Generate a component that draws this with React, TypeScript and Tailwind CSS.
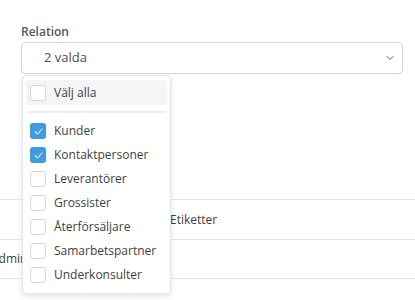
import { ChevronDown } from 'lucide-react';

const options = [
  { label: 'Kunder', checked: true },
  { label: 'Kontaktpersoner', checked: true },
  { label: 'Leverantörer', checked: false },
  { label: 'Grossister', checked: false },
  { label: 'Återförsäljare', checked: false },
  { label: 'Samarbetspartner', checked: false },
  { label: 'Underkonsulter', checked: false },
];

function Box({ checked }: { checked: boolean }) {
  if (checked) {
    return (
      <span className="flex h-4 w-4 shrink-0 items-center justify-center rounded-[3px] bg-[#3d9de0]">
        <svg width="9" height="7" viewBox="0 0 9 7" fill="none">
          <path d="M1 3.6 3.4 6 8 1" stroke="#dbeefb" strokeWidth="1.1" strokeLinecap="round" strokeLinejoin="round" />
        </svg>
      </span>
    );
  }
  return <span className="h-4 w-4 shrink-0 rounded-[3px] border border-[#d4d6db] bg-white" />;
}

export default function App() {
  return (
    <div className="relative h-[300px] w-[415px] overflow-hidden bg-white text-[#3b3e45]" style={{ fontFamily: '"Open Sans", Lato, sans-serif' }}>
      <div className="px-[21px] pt-[24px]">
        <label className="block text-[12px] font-semibold leading-[16px] text-[#555860]">Relation</label>
        <div className="relative mt-[2px]">
          <button className="flex h-[32px] w-[382px] items-center justify-between rounded-[4px] border border-[#d3d5da] bg-white pl-[22px] pr-[6px] text-[13px] text-[#4a4d55]">
            <span>2 valda</span>
            <ChevronDown size={12} strokeWidth={1.8} className="text-[#4a4d55]" />
          </button>

          <div className="absolute left-[1px] top-[33px] z-10 w-[149px] rounded-[4px] border border-[#e3e5e8] bg-white px-[3px] pb-[6px] pt-[4px] shadow-[0_2px_6px_rgba(0,0,0,0.12)]">
            <div className="flex h-[25px] items-center gap-[8px] rounded-[2px] bg-[#f4f5f7] px-[4px]">
              <Box checked={false} />
              <span className="text-[12px] leading-none">Välj alla</span>
            </div>
            <div className="mx-[1px] my-[6px] h-[2px] bg-[#eeeff1]" />
            <div className="flex flex-col">
              {options.map((o) => (
                <div key={o.label} className="flex h-[24px] items-center gap-[8px] px-[4px]">
                  <Box checked={o.checked} />
                  <span className="text-[12px] leading-none">{o.label}</span>
                </div>
              ))}
            </div>
          </div>
        </div>
      </div>

      <div className="mt-[125px] border-t border-[#e5e7ea]">
        <div className="flex h-[39px] items-center pl-[170px] text-[12px] text-[#3b3e45]">Etiketter</div>
        <div className="flex h-[39px] items-center border-t border-[#e5e7ea] text-[12px]">
          <span className="-ml-[9px]">Admin</span>
        </div>
        <div className="border-t border-[#e5e7ea]" />
      </div>
    </div>
  );
}
